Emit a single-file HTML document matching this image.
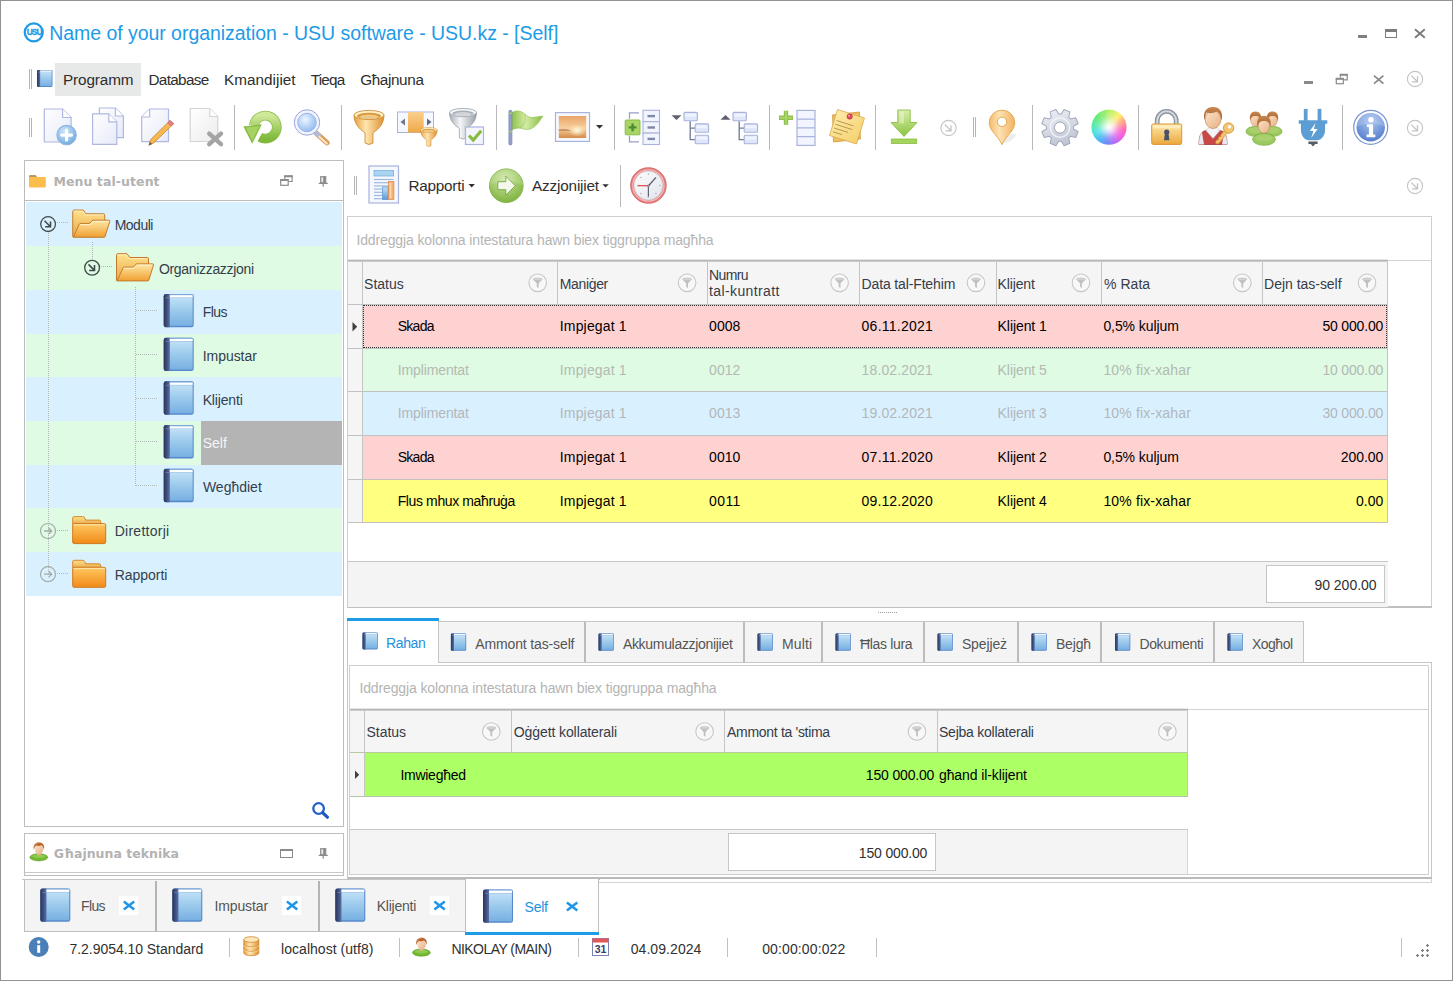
<!DOCTYPE html>
<html lang="mt"><head><meta charset="utf-8"><title>USU software</title>
<style>
html,body{margin:0;padding:0;}
body{width:1453px;height:981px;position:relative;overflow:hidden;background:#fff;font-family:"Liberation Sans", sans-serif;font-size:13px;}
.a{position:absolute;box-sizing:border-box;}
.t{position:absolute;white-space:pre;line-height:1;}
svg{overflow:visible;}
</style></head>
<body>
<div class="a" style="left:0px;top:0px;width:1453px;height:981px;border:1px solid #929292;"></div>
<svg class="a" style="left:22px;top:21px;" width="24" height="24" viewBox="0 0 24 24"><circle cx="11.750" cy="11.350" r="9" fill="#fff" stroke="#1e9be6" stroke-width="2.300"/><text x="12.100" y="14.400" font-family="Liberation Sans, sans-serif" font-size="8.400" font-weight="700" fill="#1e9be6" text-anchor="middle" letter-spacing="-1" stroke="#1e9be6" stroke-width=".3">USU</text></svg>
<div class="t" id="t0" style="top:24px;font-size:19.5px;color:#1e9be6;letter-spacing:-0.041px;left:49.20px;">Name of your organization - USU software - USU.kz - [Self]</div>
<div class="a" style="left:1358px;top:35px;width:9px;height:3px;background:#808080;"></div>
<div class="a" style="left:1385px;top:29px;width:12px;height:9px;border:1px solid #7c7c7c;border-top-width:3px;"></div>
<svg class="a" style="left:1414px;top:28px;" width="12" height="11" viewBox="0 0 12 11"><path d="M1,1.300l9.800,8.400M10.800,1.300l-9.800,8.400" stroke="#7c7c7c" stroke-width="1.900" fill="none"/></svg>
<div class="a" style="left:29px;top:69px;width:1px;height:20px;background:#b4b4b4;"></div>
<div class="a" style="left:31px;top:69px;width:1px;height:20px;background:#b4b4b4;"></div>
<svg class="a" style="left:37px;top:70px;" width="16" height="18" viewBox="0 0 16 18"><rect x="0.00" y="0.00" width="15.50" height="17.00" rx="1.16" fill="#5688cc"/><rect x="1.55" y="0.00" width="13.95" height="2.04" rx="1.16" fill="#7aa6d8"/><rect x="3.10" y="1.96" width="11.60" height="14.04" fill="url(#gBook)"/><rect x="1.30" y="0.61" width="13.40" height="1.19" fill="#ffffff"/><path d="M1.16,0.00H3.10V17.00H1.16Q0.00,17.00 0.00,15.84V1.16Q0.00,0.00 1.16,0.00z" fill="url(#gSpine)"/><rect x="0.93" y="1.78" width="2.17" height="0.60" fill="#8ea4cc" opacity=".7"/></svg>
<div class="a" style="left:55px;top:63px;width:86px;height:33px;background:#e7e8e8;"></div>
<div class="t" id="t1" style="top:72px;font-size:15.3px;color:#2e2e2e;letter-spacing:-0.101px;left:62.90px;">Programm</div>
<div class="t" id="t2" style="top:72px;font-size:15.3px;color:#2e2e2e;letter-spacing:-0.655px;left:148.40px;">Database</div>
<div class="t" id="t3" style="top:72px;font-size:15.3px;color:#2e2e2e;letter-spacing:0.009px;left:224.10px;">Kmandijiet</div>
<div class="t" id="t4" style="top:72px;font-size:15.3px;color:#2e2e2e;letter-spacing:-0.776px;left:310.70px;">Tieqa</div>
<div class="t" id="t5" style="top:72px;font-size:15.3px;color:#2e2e2e;letter-spacing:-0.378px;left:360.20px;">Għajnuna</div>
<div class="a" style="left:1304px;top:81px;width:9px;height:3px;background:#8a8a8a;"></div>
<svg class="a" style="left:1335px;top:73px;" width="14" height="12" viewBox="0 0 14 12"><path d="M5.400,4.600v-3h6.800v5.300h-3.300" fill="none" stroke="#8a8a8a" stroke-width="1.200"/><rect x="1.300" y="5.700" width="7" height="5" fill="#fff" stroke="#8a8a8a" stroke-width="1.200"/><path d="M4.800,1.700h8M0.700,5.800h8.200" stroke="#8a8a8a" stroke-width="1.900"/></svg>
<svg class="a" style="left:1373px;top:75px;" width="12" height="10" viewBox="0 0 12 10"><path d="M1,0.600l9.400,8M10.400,0.600l-9.400,8" stroke="#8a8a8a" stroke-width="1.800" fill="none"/></svg>
<div class="a" style="left:29px;top:118px;width:1px;height:19px;background:#b4b4b4;"></div>
<div class="a" style="left:31px;top:118px;width:1px;height:19px;background:#b4b4b4;"></div>
<div class="a" style="left:234px;top:105px;width:1px;height:45px;background:#b9b9b9;"></div>
<div class="a" style="left:341px;top:105px;width:1px;height:45px;background:#b9b9b9;"></div>
<div class="a" style="left:496px;top:105px;width:1px;height:45px;background:#b9b9b9;"></div>
<div class="a" style="left:614px;top:105px;width:1px;height:45px;background:#b9b9b9;"></div>
<div class="a" style="left:769px;top:105px;width:1px;height:45px;background:#b9b9b9;"></div>
<div class="a" style="left:875px;top:105px;width:1px;height:45px;background:#b9b9b9;"></div>
<div class="a" style="left:1032px;top:105px;width:1px;height:45px;background:#b9b9b9;"></div>
<div class="a" style="left:1138px;top:105px;width:1px;height:45px;background:#b9b9b9;"></div>
<div class="a" style="left:1342px;top:105px;width:1px;height:45px;background:#b9b9b9;"></div>
<div class="a" style="left:973px;top:117px;width:1px;height:20px;background:#b4b4b4;"></div>
<div class="a" style="left:975px;top:117px;width:1px;height:20px;background:#b4b4b4;"></div>
<div class="a" style="left:24px;top:160px;width:320px;height:667px;border:1px solid #bdbdbd;"></div>
<div class="a" style="left:24px;top:200px;width:320px;height:1px;background:#bdbdbd;"></div>
<div class="t" id="t6" style="top:176px;font-size:12.5px;color:#b2b2b2;font-weight:700;letter-spacing:0.078px;left:53.40px;font-family:'DejaVu Sans',sans-serif;">Menu tal-utent</div>
<svg class="a" style="left:280px;top:174px;" width="14" height="13" viewBox="0 0 14 13"><path d="M4.800,5v-2.900h7.300v5.400h-3.400" fill="none" stroke="#8c8c8c" stroke-width="1.200"/><rect x="0.700" y="5.800" width="7.500" height="5.500" fill="#fff" stroke="#8c8c8c" stroke-width="1.200"/><path d="M4.200,2.200h8.500M0.100,5.900h8.700" stroke="#8c8c8c" stroke-width="2"/></svg>
<svg class="a" style="left:318px;top:175px;" width="11" height="13" viewBox="0 0 11 13"><rect x="2.700" y="1.700" width="5" height="6" fill="#e8e8e8" stroke="#8c8c8c" stroke-width="1.200"/><rect x="5.200" y="1.700" width="2.500" height="6" fill="#8c8c8c"/><path d="M0.800,8.300h9M5.200,8.300v3.400" stroke="#8c8c8c" stroke-width="1.200" fill="none"/></svg>
<div class="a" style="left:26px;top:202px;width:316px;height:44px;background:#d9f1ff;"></div>
<div class="a" style="left:26px;top:246px;width:316px;height:44px;background:#dffbe3;"></div>
<div class="a" style="left:26px;top:290px;width:316px;height:44px;background:#d9f1ff;"></div>
<div class="a" style="left:26px;top:334px;width:316px;height:43px;background:#dffbe3;"></div>
<div class="a" style="left:26px;top:377px;width:316px;height:44px;background:#d9f1ff;"></div>
<div class="a" style="left:26px;top:421px;width:316px;height:44px;background:#dffbe3;"></div>
<div class="a" style="left:26px;top:465px;width:316px;height:43px;background:#d9f1ff;"></div>
<div class="a" style="left:26px;top:508px;width:316px;height:44px;background:#dffbe3;"></div>
<div class="a" style="left:26px;top:552px;width:316px;height:44px;background:#d9f1ff;"></div>
<div class="a" style="left:201px;top:421px;width:141px;height:44px;background:#b4b4b4;"></div>
<div class="t" id="t7" style="top:218px;font-size:14px;color:#343e4c;letter-spacing:-0.510px;left:114.70px;">Moduli</div>
<div class="t" id="t8" style="top:262px;font-size:14px;color:#343e4c;letter-spacing:-0.315px;left:158.90px;">Organizzazzjoni</div>
<div class="t" id="t9" style="top:305px;font-size:14px;color:#343e4c;letter-spacing:-0.584px;left:202.70px;">Flus</div>
<div class="t" id="t10" style="top:349px;font-size:14px;color:#343e4c;letter-spacing:-0.038px;left:202.70px;">Impustar</div>
<div class="t" id="t11" style="top:393px;font-size:14px;color:#343e4c;letter-spacing:-0.164px;left:202.70px;">Klijenti</div>
<div class="t" id="t12" style="top:436px;font-size:14px;color:#f4f4f4;letter-spacing:0.025px;left:202.70px;">Self</div>
<div class="t" id="t13" style="top:480px;font-size:14px;color:#343e4c;left:202.90px;">Wegħdiet</div>
<div class="t" id="t14" style="top:524px;font-size:14px;color:#343e4c;letter-spacing:0.264px;left:114.70px;">Direttorji</div>
<div class="t" id="t15" style="top:568px;font-size:14px;color:#343e4c;letter-spacing:-0.032px;left:114.70px;">Rapporti</div>
<div class="a" style="left:24px;top:833px;width:320px;height:43px;border:1px solid #bdbdbd;"></div>
<div class="a" style="left:25px;top:872px;width:318px;height:1px;background:#c8c8c8;"></div>
<div class="t" id="t16" style="top:848px;font-size:12.5px;color:#b2b2b2;font-weight:700;letter-spacing:0.010px;left:53.80px;font-family:'DejaVu Sans',sans-serif;">Għajnuna teknika</div>
<div class="a" style="left:280px;top:849px;width:13px;height:9px;border:1px solid #8a8a8a;border-top-width:2px;"></div>
<svg class="a" style="left:318px;top:847px;" width="11" height="13" viewBox="0 0 11 13"><rect x="2.700" y="1.700" width="5" height="6" fill="#e8e8e8" stroke="#8c8c8c" stroke-width="1.200"/><rect x="5.200" y="1.700" width="2.500" height="6" fill="#8c8c8c"/><path d="M0.800,8.300h9M5.200,8.300v3.400" stroke="#8c8c8c" stroke-width="1.200" fill="none"/></svg>
<div class="a" style="left:354px;top:176px;width:1px;height:19px;background:#b4b4b4;"></div>
<div class="a" style="left:356px;top:176px;width:1px;height:19px;background:#b4b4b4;"></div>
<div class="t" id="t17" style="top:178px;font-size:15.3px;color:#2e2e2e;letter-spacing:-0.233px;left:408.40px;">Rapporti</div>
<div class="t" id="t18" style="top:178px;font-size:15.3px;color:#2e2e2e;letter-spacing:-0.188px;left:532.10px;">Azzjonijiet</div>
<div class="a" style="left:620px;top:165px;width:1px;height:42px;background:#b9b9b9;"></div>
<div class="a" style="left:347px;top:216px;width:1085px;height:392px;border:1px solid #cfcfcf;border-bottom:2px solid #c0c0c0;"></div>
<div class="t" id="t19" style="top:233px;font-size:14px;color:#b4b4b4;letter-spacing:-0.128px;left:356.40px;">Iddreggja kolonna intestatura hawn biex tiggruppa magħha</div>
<div class="a" style="left:1387px;top:260px;width:44px;height:1px;background:#d2d2d2;"></div>
<div class="a" style="left:348px;top:259px;width:1040px;height:3px;background:linear-gradient(#e6e6e6 0 33%,#b6b6b6 33% 66%,#cdcdcd 66%);"></div>
<div class="a" style="left:348px;top:262px;width:1039px;height:42px;background:#f5f5f5;"></div>
<div class="a" style="left:1387px;top:262px;width:1px;height:261px;background:#c4c4c4;"></div>
<div class="a" style="left:362px;top:262px;width:1px;height:42px;background:#c4c4c4;"></div>
<div class="a" style="left:557px;top:262px;width:1px;height:42px;background:#c4c4c4;"></div>
<div class="a" style="left:707px;top:262px;width:1px;height:42px;background:#c4c4c4;"></div>
<div class="a" style="left:859px;top:262px;width:1px;height:42px;background:#c4c4c4;"></div>
<div class="a" style="left:996px;top:262px;width:1px;height:42px;background:#c4c4c4;"></div>
<div class="a" style="left:1101px;top:262px;width:1px;height:42px;background:#c4c4c4;"></div>
<div class="a" style="left:1262px;top:262px;width:1px;height:42px;background:#c4c4c4;"></div>
<div class="t" id="t20" style="top:277px;font-size:14px;color:#363c48;letter-spacing:-0.021px;left:364.10px;">Status</div>
<div class="t" id="t21" style="top:277px;font-size:14px;color:#363c48;letter-spacing:-0.349px;left:559.80px;">Maniġer</div>
<div class="t" id="t22" style="top:277px;font-size:14px;color:#363c48;letter-spacing:-0.143px;left:861.60px;">Data tal-Ftehim</div>
<div class="t" id="t23" style="top:277px;font-size:14px;color:#363c48;letter-spacing:-0.157px;left:997.60px;">Klijent</div>
<div class="t" id="t24" style="top:277px;font-size:14px;color:#363c48;letter-spacing:0.016px;left:1104.10px;">% Rata</div>
<div class="t" id="t25" style="top:277px;font-size:14px;color:#363c48;letter-spacing:-0.026px;left:1264.10px;">Dejn tas-self</div>
<div class="t" id="t26" style="top:268px;font-size:14px;color:#363c48;letter-spacing:-0.629px;left:709.10px;">Numru</div>
<div class="t" id="t27" style="top:284px;font-size:14px;color:#363c48;letter-spacing:0.378px;left:709.10px;">tal-kuntratt</div>
<div class="a" style="left:348px;top:304px;width:14px;height:44px;background:#f5f5f5;"></div>
<div class="a" style="left:363px;top:305px;width:1024px;height:43px;background:#ffd2d2;"></div>
<div class="a" style="left:348px;top:304px;width:1039px;height:1px;background:#c2c2c2;"></div>
<div class="a" style="left:348px;top:348px;width:14px;height:43px;background:#f5f5f5;"></div>
<div class="a" style="left:363px;top:349px;width:1024px;height:42px;background:#dffbe3;"></div>
<div class="a" style="left:348px;top:348px;width:1039px;height:1px;background:#c2c2c2;"></div>
<div class="a" style="left:348px;top:391px;width:14px;height:44px;background:#f5f5f5;"></div>
<div class="a" style="left:363px;top:392px;width:1024px;height:43px;background:#d9f1ff;"></div>
<div class="a" style="left:348px;top:391px;width:1039px;height:1px;background:#c2c2c2;"></div>
<div class="a" style="left:348px;top:435px;width:14px;height:44px;background:#f5f5f5;"></div>
<div class="a" style="left:363px;top:436px;width:1024px;height:43px;background:#ffd2d2;"></div>
<div class="a" style="left:348px;top:435px;width:1039px;height:1px;background:#c2c2c2;"></div>
<div class="a" style="left:348px;top:479px;width:14px;height:43px;background:#f5f5f5;"></div>
<div class="a" style="left:363px;top:480px;width:1024px;height:42px;background:#ffff80;"></div>
<div class="a" style="left:348px;top:479px;width:1039px;height:1px;background:#c2c2c2;"></div>
<div class="a" style="left:348px;top:522px;width:1040px;height:1px;background:#c2c2c2;"></div>
<div class="a" style="left:362px;top:304px;width:1px;height:218px;background:#c4c4c4;"></div>
<div class="a" style="left:363px;top:305px;width:1024px;height:43px;border:1px dotted #303030;"></div>
<div class="t" id="t28" style="top:319px;font-size:14px;color:#000;letter-spacing:-0.701px;left:397.70px;">Skada</div>
<div class="t" id="t29" style="top:319px;font-size:14px;color:#000;letter-spacing:0.158px;left:559.80px;">Impjegat 1</div>
<div class="t" id="t30" style="top:319px;font-size:14px;color:#000;letter-spacing:0.048px;left:709.10px;">0008</div>
<div class="t" id="t31" style="top:319px;font-size:14px;color:#000;letter-spacing:0.241px;left:861.60px;">06.11.2021</div>
<div class="t" id="t32" style="top:319px;font-size:14px;color:#000;letter-spacing:-0.077px;left:997.60px;">Klijent 1</div>
<div class="t" id="t33" style="top:319px;font-size:14px;color:#000;letter-spacing:-0.077px;left:1103.40px;">0,5% kuljum</div>
<div class="t" id="t34" style="top:319px;font-size:14px;color:#000;letter-spacing:-0.175px;right:69.87px;">50 000.00</div>
<div class="t" id="t35" style="top:363px;font-size:14px;color:#b3b9b3;letter-spacing:-0.116px;left:397.70px;">Implimentat</div>
<div class="t" id="t36" style="top:363px;font-size:14px;color:#b3b9b3;letter-spacing:0.158px;left:559.80px;">Impjegat 1</div>
<div class="t" id="t37" style="top:363px;font-size:14px;color:#b3b9b3;letter-spacing:0.048px;left:709.10px;">0012</div>
<div class="t" id="t38" style="top:363px;font-size:14px;color:#b3b9b3;letter-spacing:0.125px;left:861.60px;">18.02.2021</div>
<div class="t" id="t39" style="top:363px;font-size:14px;color:#b3b9b3;letter-spacing:-0.077px;left:997.60px;">Klijent 5</div>
<div class="t" id="t40" style="top:363px;font-size:14px;color:#b3b9b3;letter-spacing:0.151px;left:1103.40px;">10% fix-xahar</div>
<div class="t" id="t41" style="top:363px;font-size:14px;color:#b3b9b3;letter-spacing:-0.175px;right:69.87px;">10 000.00</div>
<div class="t" id="t42" style="top:406px;font-size:14px;color:#b3b6bb;letter-spacing:-0.116px;left:397.70px;">Implimentat</div>
<div class="t" id="t43" style="top:406px;font-size:14px;color:#b3b6bb;letter-spacing:0.158px;left:559.80px;">Impjegat 1</div>
<div class="t" id="t44" style="top:406px;font-size:14px;color:#b3b6bb;letter-spacing:0.048px;left:709.10px;">0013</div>
<div class="t" id="t45" style="top:406px;font-size:14px;color:#b3b6bb;letter-spacing:0.125px;left:861.60px;">19.02.2021</div>
<div class="t" id="t46" style="top:406px;font-size:14px;color:#b3b6bb;letter-spacing:-0.077px;left:997.60px;">Klijent 3</div>
<div class="t" id="t47" style="top:406px;font-size:14px;color:#b3b6bb;letter-spacing:0.151px;left:1103.40px;">10% fix-xahar</div>
<div class="t" id="t48" style="top:406px;font-size:14px;color:#b3b6bb;letter-spacing:-0.175px;right:69.87px;">30 000.00</div>
<div class="t" id="t49" style="top:450px;font-size:14px;color:#000;letter-spacing:-0.701px;left:397.70px;">Skada</div>
<div class="t" id="t50" style="top:450px;font-size:14px;color:#000;letter-spacing:0.158px;left:559.80px;">Impjegat 1</div>
<div class="t" id="t51" style="top:450px;font-size:14px;color:#000;letter-spacing:0.048px;left:709.10px;">0010</div>
<div class="t" id="t52" style="top:450px;font-size:14px;color:#000;letter-spacing:0.241px;left:861.60px;">07.11.2020</div>
<div class="t" id="t53" style="top:450px;font-size:14px;color:#000;letter-spacing:-0.077px;left:997.60px;">Klijent 2</div>
<div class="t" id="t54" style="top:450px;font-size:14px;color:#000;letter-spacing:-0.077px;left:1103.40px;">0,5% kuljum</div>
<div class="t" id="t55" style="top:450px;font-size:14px;color:#000;letter-spacing:-0.046px;right:69.75px;">200.00</div>
<div class="t" id="t56" style="top:494px;font-size:14px;color:#000;letter-spacing:-0.382px;left:397.70px;">Flus mhux maħruġa</div>
<div class="t" id="t57" style="top:494px;font-size:14px;color:#000;letter-spacing:0.158px;left:559.80px;">Impjegat 1</div>
<div class="t" id="t58" style="top:494px;font-size:14px;color:#000;letter-spacing:0.397px;left:709.10px;">0011</div>
<div class="t" id="t59" style="top:494px;font-size:14px;color:#000;letter-spacing:0.125px;left:861.60px;">09.12.2020</div>
<div class="t" id="t60" style="top:494px;font-size:14px;color:#000;letter-spacing:-0.077px;left:997.60px;">Klijent 4</div>
<div class="t" id="t61" style="top:494px;font-size:14px;color:#000;letter-spacing:0.151px;left:1103.40px;">10% fix-xahar</div>
<div class="t" id="t62" style="top:494px;font-size:14px;color:#000;letter-spacing:-0.017px;right:69.72px;">0.00</div>
<div class="a" style="left:348px;top:561px;width:1040px;height:1px;background:#c8c8c8;"></div>
<div class="a" style="left:348px;top:562px;width:1040px;height:45px;background:#f4f4f4;"></div>
<div class="a" style="left:1266px;top:565px;width:119px;height:38px;background:#fff;border:1px solid #c6c6c6;"></div>
<div class="t" id="t63" style="top:578px;font-size:14px;color:#303030;letter-spacing:-0.012px;right:76.41px;">90 200.00</div>
<div class="a" style="left:347px;top:662px;width:1085px;height:217px;border:1px solid #c6c6c6;border-bottom:2px solid #bababa;"></div>
<div class="a" style="left:439px;top:621px;width:865px;height:41px;background:#f4f4f4;border:1px solid #c6c6c6;border-left:none;border-bottom:none;"></div>
<div class="a" style="left:347px;top:621px;width:92px;height:42px;background:#fff;border:1px solid #c6c6c6;border-bottom:none;border-top:none;"></div>
<div class="a" style="left:347px;top:618px;width:92px;height:3px;background:#1e9be6;"></div>
<div class="t" id="t64" style="top:636px;font-size:14px;color:#1e90e0;letter-spacing:-0.391px;left:386.10px;">Rahan</div>
<div class="t" id="t65" style="top:637px;font-size:14px;color:#545454;letter-spacing:-0.139px;left:475.30px;">Ammont tas-self</div>
<div class="a" style="left:584px;top:622px;width:2px;height:40px;background:#bcbcbc;"></div>
<div class="t" id="t66" style="top:637px;font-size:14px;color:#545454;letter-spacing:-0.310px;left:622.90px;">Akkumulazzjonijiet</div>
<div class="a" style="left:743px;top:622px;width:2px;height:40px;background:#bcbcbc;"></div>
<div class="t" id="t67" style="top:637px;font-size:14px;color:#545454;letter-spacing:0.159px;left:781.90px;">Multi</div>
<div class="a" style="left:821px;top:622px;width:2px;height:40px;background:#bcbcbc;"></div>
<div class="t" id="t68" style="top:637px;font-size:14px;color:#545454;letter-spacing:-0.319px;left:859.90px;">Ħlas lura</div>
<div class="a" style="left:923px;top:622px;width:2px;height:40px;background:#bcbcbc;"></div>
<div class="t" id="t69" style="top:637px;font-size:14px;color:#545454;letter-spacing:-0.120px;left:961.90px;">Spejjeż</div>
<div class="a" style="left:1017px;top:622px;width:2px;height:40px;background:#bcbcbc;"></div>
<div class="t" id="t70" style="top:637px;font-size:14px;color:#545454;letter-spacing:-0.153px;left:1055.90px;">Bejgħ</div>
<div class="a" style="left:1100px;top:622px;width:2px;height:40px;background:#bcbcbc;"></div>
<div class="t" id="t71" style="top:637px;font-size:14px;color:#545454;letter-spacing:-0.340px;left:1139.40px;">Dokumenti</div>
<div class="a" style="left:1213px;top:622px;width:2px;height:40px;background:#bcbcbc;"></div>
<div class="t" id="t72" style="top:637px;font-size:14px;color:#545454;letter-spacing:-0.479px;left:1251.90px;">Xogħol</div>
<div class="a" style="left:349px;top:665px;width:1080px;height:210px;border:1px solid #cfcfcf;"></div>
<div class="t" id="t73" style="top:681px;font-size:14px;color:#b4b4b4;letter-spacing:-0.128px;left:359.40px;">Iddreggja kolonna intestatura hawn biex tiggruppa magħha</div>
<div class="a" style="left:1187px;top:709px;width:241px;height:1px;background:#d2d2d2;"></div>
<div class="a" style="left:350px;top:708px;width:838px;height:3px;background:linear-gradient(#e6e6e6 0 33%,#b6b6b6 33% 66%,#cdcdcd 66%);"></div>
<div class="a" style="left:350px;top:711px;width:837px;height:41px;background:#f5f5f5;"></div>
<div class="a" style="left:364px;top:711px;width:1px;height:41px;background:#c4c4c4;"></div>
<div class="a" style="left:511px;top:711px;width:1px;height:41px;background:#c4c4c4;"></div>
<div class="a" style="left:724px;top:711px;width:1px;height:41px;background:#c4c4c4;"></div>
<div class="a" style="left:937px;top:711px;width:1px;height:41px;background:#c4c4c4;"></div>
<div class="a" style="left:1187px;top:711px;width:1px;height:41px;background:#c4c4c4;"></div>
<div class="t" id="t74" style="top:725px;font-size:14px;color:#363c48;letter-spacing:-0.021px;left:366.50px;">Status</div>
<div class="t" id="t75" style="top:725px;font-size:14px;color:#363c48;letter-spacing:-0.098px;left:513.80px;">Oġġett kollaterali</div>
<div class="t" id="t76" style="top:725px;font-size:14px;color:#363c48;letter-spacing:-0.314px;left:727.10px;">Ammont ta 'stima</div>
<div class="t" id="t77" style="top:725px;font-size:14px;color:#363c48;letter-spacing:-0.246px;left:939.00px;">Sejba kollaterali</div>
<div class="a" style="left:350px;top:752px;width:838px;height:1px;background:#b6c8a4;"></div>
<div class="a" style="left:350px;top:753px;width:14px;height:43px;background:#f5f5f5;"></div>
<div class="a" style="left:364px;top:752px;width:1px;height:44px;background:#c4c4c4;"></div>
<div class="a" style="left:365px;top:753px;width:822px;height:43px;background:#adff66;"></div>
<div class="a" style="left:350px;top:796px;width:838px;height:1px;background:#b4c4a4;"></div>
<div class="a" style="left:1187px;top:711px;width:1px;height:86px;background:#c4c4c4;"></div>
<div class="t" id="t78" style="top:768px;font-size:14px;color:#000;letter-spacing:-0.263px;left:400.40px;">Imwiegħed</div>
<div class="t" id="t79" style="top:768px;font-size:14px;color:#000;letter-spacing:-0.164px;right:518.76px;">150 000.00</div>
<div class="t" id="t80" style="top:768px;font-size:14px;color:#000;letter-spacing:-0.100px;left:939.00px;">għand il-klijent</div>
<div class="a" style="left:350px;top:829px;width:838px;height:1px;background:#c8c8c8;"></div>
<div class="a" style="left:350px;top:830px;width:838px;height:44px;background:#f4f4f4;"></div>
<div class="a" style="left:1187px;top:830px;width:1px;height:44px;background:#d8d8d8;"></div>
<div class="a" style="left:728px;top:833px;width:208px;height:38px;background:#fff;border:1px solid #c6c6c6;"></div>
<div class="t" id="t81" style="top:846px;font-size:14px;color:#303030;letter-spacing:-0.164px;right:525.76px;">150 000.00</div>
<div class="a" style="left:22px;top:879px;width:578px;height:1px;background:#c4c4c4;"></div>
<div class="a" style="left:598px;top:882px;width:834px;height:1px;background:#d4d4d4;"></div>
<div class="a" style="left:1431px;top:879px;width:1px;height:4px;background:#d4d4d4;"></div>
<div class="a" style="left:24px;top:880px;width:442px;height:52px;background:#f4f4f4;border:1px solid #bebebe;border-top:none;border-right:none;"></div>
<div class="a" style="left:119px;top:896px;width:19px;height:19px;background:#fff;"></div>
<div class="t" id="t82" style="top:899px;font-size:14px;color:#545454;letter-spacing:-0.651px;left:81.10px;">Flus</div>
<div class="a" style="left:155px;top:881px;width:2px;height:50px;background:#b4b4b4;"></div>
<div class="a" style="left:282px;top:896px;width:19px;height:19px;background:#fff;"></div>
<div class="t" id="t83" style="top:899px;font-size:14px;color:#545454;letter-spacing:-0.110px;left:214.40px;">Impustar</div>
<div class="a" style="left:318px;top:881px;width:2px;height:50px;background:#b4b4b4;"></div>
<div class="a" style="left:430px;top:896px;width:19px;height:19px;background:#fff;"></div>
<div class="t" id="t84" style="top:899px;font-size:14px;color:#545454;letter-spacing:-0.236px;left:376.70px;">Klijenti</div>
<div class="a" style="left:465px;top:879px;width:134px;height:53px;background:#fff;border:1px solid #c0c0c0;border-bottom:none;border-top:none"></div>
<div class="a" style="left:465px;top:932px;width:134px;height:3px;background:#1e9be6;"></div>
<div class="t" id="t85" style="top:900px;font-size:14px;color:#1e90e0;letter-spacing:-0.242px;left:524.60px;">Self</div>
<div class="t" id="t86" style="top:942px;font-size:14px;color:#303030;letter-spacing:-0.046px;left:69.50px;">7.2.9054.10 Standard</div>
<div class="a" style="left:229px;top:938px;width:1px;height:19px;background:#c0c0c0;"></div>
<div class="a" style="left:399px;top:938px;width:1px;height:19px;background:#c0c0c0;"></div>
<div class="a" style="left:578px;top:938px;width:1px;height:19px;background:#c0c0c0;"></div>
<div class="a" style="left:727px;top:938px;width:1px;height:19px;background:#c0c0c0;"></div>
<div class="a" style="left:876px;top:938px;width:1px;height:19px;background:#c0c0c0;"></div>
<div class="a" style="left:1401px;top:938px;width:1px;height:19px;background:#c0c0c0;"></div>
<div class="t" id="t87" style="top:942px;font-size:14px;color:#303030;letter-spacing:0.031px;left:281.10px;">localhost (utf8)</div>
<div class="t" id="t88" style="top:942px;font-size:14px;color:#303030;letter-spacing:-0.548px;left:451.40px;">NIKOLAY (MAIN)</div>
<div class="t" id="t89" style="top:942px;font-size:14px;color:#303030;letter-spacing:0.069px;left:630.70px;">04.09.2024</div>
<div class="t" id="t90" style="top:942px;font-size:14px;color:#303030;letter-spacing:0.123px;left:762.20px;">00:00:00:022</div>
<svg class="a" style="left:0;top:0;pointer-events:none" width="1453" height="981" viewBox="0 0 1453 981"><defs>
<linearGradient id="gPage" x1="0" y1="0" x2="1" y2="1"><stop offset="0" stop-color="#ffffff"/><stop offset="1" stop-color="#e6eaf8"/></linearGradient>
<linearGradient id="gPageG" x1="0" y1="0" x2="1" y2="1"><stop offset="0" stop-color="#ffffff"/><stop offset="1" stop-color="#ececec"/></linearGradient>
<linearGradient id="gGreen" x1="0" y1="0" x2="0" y2="1"><stop offset="0" stop-color="#cfe89a"/><stop offset="1" stop-color="#7fb83a"/></linearGradient>
<linearGradient id="gGreenL" x1="0" y1="0" x2="0" y2="1"><stop offset="0" stop-color="#d8eea8"/><stop offset="1" stop-color="#8ac442"/></linearGradient>
<linearGradient id="gGreenH" x1="0" y1="0" x2="1" y2="0"><stop offset="0" stop-color="#8cc048"/><stop offset=".45" stop-color="#d4ecA4"/><stop offset="1" stop-color="#86bc42"/></linearGradient>
<linearGradient id="gOrange" x1="0" y1="0" x2="1" y2="0"><stop offset="0" stop-color="#e8a040"/><stop offset=".4" stop-color="#ffe6b0"/><stop offset="1" stop-color="#e09030"/></linearGradient>
<linearGradient id="gOrangeV" x1="0" y1="0" x2="0" y2="1"><stop offset="0" stop-color="#ffe9b4"/><stop offset="1" stop-color="#eda234"/></linearGradient>
<linearGradient id="gPin" x1="0" y1="0" x2="1" y2="0"><stop offset="0" stop-color="#f4bc6c"/><stop offset=".4" stop-color="#fde2b4"/><stop offset="1" stop-color="#f0b260"/></linearGradient>
<linearGradient id="gSilver" x1="0" y1="0" x2="1" y2="0"><stop offset="0" stop-color="#a8b0b8"/><stop offset=".4" stop-color="#f4f6f8"/><stop offset="1" stop-color="#98a0a8"/></linearGradient>
<linearGradient id="gBlueV" x1="0" y1="0" x2="0" y2="1"><stop offset="0" stop-color="#c4e2fa"/><stop offset="1" stop-color="#5b9ad6"/></linearGradient>
<linearGradient id="gBook" x1="0" y1="0" x2="0" y2="1"><stop offset="0" stop-color="#c0e0f6"/><stop offset=".45" stop-color="#9ccaec"/><stop offset="1" stop-color="#78b0e2"/></linearGradient>
<linearGradient id="gSpine" x1="0" y1="0" x2="1" y2="0"><stop offset="0" stop-color="#28345a"/><stop offset=".5" stop-color="#3e4e7c"/><stop offset="1" stop-color="#5a6ea0"/></linearGradient>
<linearGradient id="gFolder" x1="0" y1="0" x2="0" y2="1"><stop offset="0" stop-color="#ffe9a8"/><stop offset="1" stop-color="#f0a030"/></linearGradient>
<linearGradient id="gFolderC" x1="0" y1="0" x2="0" y2="1"><stop offset="0" stop-color="#ffc860"/><stop offset="1" stop-color="#f08a18"/></linearGradient>
<linearGradient id="gFolderB" x1="0" y1="0" x2="0" y2="1"><stop offset="0" stop-color="#ffe28c"/><stop offset="1" stop-color="#e8a848"/></linearGradient>
<radialGradient id="gLens" cx=".4" cy=".35" r=".7"><stop offset="0" stop-color="#eef6ff"/><stop offset="1" stop-color="#8cb8f0"/></radialGradient>
<radialGradient id="gInfo" cx=".5" cy=".3" r=".8"><stop offset="0" stop-color="#a8c4f0"/><stop offset="1" stop-color="#4a74c8"/></radialGradient>
<radialGradient id="gGo" cx=".45" cy=".3" r=".8"><stop offset="0" stop-color="#cfe8a0"/><stop offset="1" stop-color="#74ac34"/></radialGradient>
<radialGradient id="gPlusC" cx=".4" cy=".3" r=".8"><stop offset="0" stop-color="#cfe6fa"/><stop offset="1" stop-color="#6aa4dc"/></radialGradient>
<linearGradient id="gFace" x1="0" y1="0" x2="1" y2="1"><stop offset="0" stop-color="#ffffff"/><stop offset="1" stop-color="#dfe3ea"/></linearGradient>
<linearGradient id="gLock" x1="0" y1="0" x2="0" y2="1"><stop offset="0" stop-color="#ffe8a8"/><stop offset="1" stop-color="#eca83c"/></linearGradient>
<linearGradient id="gGear" x1="0" y1="0" x2="1" y2="1"><stop offset="0" stop-color="#f2f4f8"/><stop offset="1" stop-color="#b4bccc"/></linearGradient>
<linearGradient id="gSky" x1="0" y1="0" x2="0" y2="1"><stop offset="0" stop-color="#e8a468"/><stop offset=".55" stop-color="#f8d09c"/><stop offset="1" stop-color="#d48c4c"/></linearGradient>
<radialGradient id="gSun" cx=".5" cy=".5" r=".5"><stop offset="0" stop-color="#fffbe8"/><stop offset="1" stop-color="#fff0c0" stop-opacity="0"/></radialGradient>
<linearGradient id="gSkin" x1="0" y1="0" x2="1" y2="1"><stop offset="0" stop-color="#fde4c8"/><stop offset="1" stop-color="#e8b088"/></linearGradient>
<linearGradient id="gHair" x1="0" y1="0" x2="0" y2="1"><stop offset="0" stop-color="#c88850"/><stop offset="1" stop-color="#a05c28"/></linearGradient>
<linearGradient id="gNote" x1="0" y1="0" x2="1" y2="1"><stop offset="0" stop-color="#fff0b0"/><stop offset="1" stop-color="#f4cc68"/></linearGradient>
<filter id="fBlur" x="-20%" y="-20%" width="140%" height="140%"><feGaussianBlur stdDeviation="2.2"/></filter><radialGradient id="gWheelW" cx=".5" cy=".5" r=".5"><stop offset="0" stop-color="#fff" stop-opacity="1"/><stop offset=".22" stop-color="#fff" stop-opacity=".75"/><stop offset=".6" stop-color="#fff" stop-opacity=".25"/><stop offset="1" stop-color="#fff" stop-opacity="0"/></radialGradient></defs><g transform="translate(1415,79)"><circle r="7.6" fill="#fff" stroke="#c4c4c4" stroke-width="1.1"/><path d="M-3.69,-3.39L2.49,2.79M-3.03,2.79H2.49V-2.71" fill="none" stroke="#c4c4c4" stroke-width="1.32"/></g>
<g transform="translate(1415,128)"><circle r="7.6" fill="#fff" stroke="#c4c4c4" stroke-width="1.1"/><path d="M-3.69,-3.39L2.49,2.79M-3.03,2.79H2.49V-2.71" fill="none" stroke="#c4c4c4" stroke-width="1.32"/></g>
<g transform="translate(1415,186)"><circle r="7.6" fill="#fff" stroke="#c4c4c4" stroke-width="1.1"/><path d="M-3.69,-3.39L2.49,2.79M-3.03,2.79H2.49V-2.71" fill="none" stroke="#c4c4c4" stroke-width="1.32"/></g>
<g transform="translate(60,127)"><path d="M-15.7,-18h18.3l8.5,8.5v24.5h-26.8z" fill="url(#gPage)" stroke="#aeb8e0" stroke-width="1.2"/><path d="M2.6000000000000014,-18v8.5h8.5" fill="#fff" stroke="#aeb8e0" stroke-width="1.2"/><circle cx="6.600" cy="8.100" r="9.700" fill="url(#gPlusC)" stroke="#8cb4e0" stroke-width="1.100"/><path d="M6.600,3.200v9.800M1.700,8.100h9.800" stroke="#fff" stroke-width="3.200" stroke-linecap="round"/></g>
<g transform="translate(108,127)"><path d="M-8.6,-19h16l8,8v21.6h-24z" fill="url(#gPage)" stroke="#aeb8e0" stroke-width="1.2"/><path d="M7.4,-19v8h8" fill="#fff" stroke="#aeb8e0" stroke-width="1.2"/><path d="M-15.4,-13.2h16.2l8,8v22.6h-24.2z" fill="url(#gPage)" stroke="#aeb8e0" stroke-width="1.2"/><path d="M0.7999999999999989,-13.2v8h8" fill="#fff" stroke="#aeb8e0" stroke-width="1.2"/></g>
<g transform="translate(157,127)"><path d="M-7.300000000000001,-18h18.8v32.6h-26.8v-24.6z" fill="url(#gPage)" stroke="#aeb8e0" stroke-width="1.2"/><path d="M-7.300000000000001,-18v8h-8" fill="#fff" stroke="#aeb8e0" stroke-width="1.2"/><path d="M13,-6.5l3.6,3.2l-19.5,19l-5.2,2.6l1.6,-5.6z" fill="#f6b850" stroke="#c88830" stroke-width=".8"/><path d="M11.2,-4.6l3.6,3.2" stroke="#fce0a0" stroke-width="1.6"/><path d="M13,-6.5l3.6,3.2l-2.4,2.4l-3.6,-3.2z" fill="#e8808c" stroke="#c05868" stroke-width=".6"/><path d="M-8.1,18.3l1.0,-3.3l2.2,2.0z" fill="#605048"/></g>
<g transform="translate(206,127)"><path d="M-15.8,-18.5h19.6l8,8v25h-27.6z" fill="url(#gPageG)" stroke="#d4d4d4" stroke-width="1.2"/><path d="M3.8000000000000007,-18.5v8h8" fill="#fff" stroke="#d4d4d4" stroke-width="1.2"/><path d="M3.200,6.600l11.800,10.600M15,6.600l-11.800,10.600" stroke="#a4a4a4" stroke-width="4.400" stroke-linecap="round"/></g>
<g transform="translate(263,127)"><path d="M-3.10,10.25A11.5,11.5 0 1 0 -9.09,-1.50" fill="none" stroke="#86bc44" stroke-width="9.8"/><path d="M-3.10,10.25A11.5,11.5 0 1 0 -9.09,-1.50" fill="none" stroke="url(#gGreen)" stroke-width="8.2"/><path d="M-19.6,-0.6l18.4,-2.2l-9.6,19.6z" fill="#86bc44"/><path d="M-17.2,0.6l13.8,-1.6l-7.3,14.8z" fill="#a6d262"/></g>
<g transform="translate(311,127.5)"><path d="M5,5.500l11,9.800" stroke="#d89c5c" stroke-width="5.200" stroke-linecap="round"/><path d="M4,4.600l5,4.500" stroke="#b4bcd8" stroke-width="4.600"/><path d="M8.500,9.400l7.400,6.600" stroke="#fce8c4" stroke-width="2" stroke-linecap="round"/><circle cx="-4" cy="-5" r="12.700" fill="#f2f5fe" stroke="#9aa6d6" stroke-width="1"/><circle cx="-4" cy="-5" r="9.300" fill="url(#gLens)" stroke="#9fb4ea" stroke-width="1"/></g>
<g transform="translate(369,127.5)"><g transform="scale(1.0)"><path d="M-15,-12.5C-15,-1 -6,3.5 -4,5.5L-4,15.5Q0,18.5 4,15.5L4,5.5C6,3.5 15,-1 15,-12.5z" fill="url(#gOrange)" stroke="#c88428" stroke-width=".8"/><ellipse cx="0" cy="-12.5" rx="15" ry="4.6" fill="#fff0c8" stroke="#c88428" stroke-width=".8"/><ellipse cx="0" cy="-11.6" rx="12" ry="3.1" fill="#d89838"/><ellipse cx="0" cy="-10.8" rx="9.5" ry="2.2" fill="#fff0c8" opacity=".55"/></g></g>
<g transform="translate(417.5,128)"><rect x="-20" y="-16" width="36" height="20.5" fill="#f6f8ff" stroke="#a9b3dc" stroke-width="1"/><rect x="-9.5" y="-16" width="15.5" height="20.5" fill="#f0b060"/><rect x="-9.5" y="-16" width="15.5" height="20.5" fill="url(#gOrangeV)" opacity=".55"/><path d="M-12.5,-9.5v7l-4.5,-3.5z" fill="#707890"/><path d="M9.5,-9.5v7l4.5,-3.5z" fill="#606880"/><g transform="translate(11.300,9)"><g transform="scale(0.56)"><path d="M-15,-12.5C-15,-1 -6,3.5 -4,5.5L-4,15.5Q0,18.5 4,15.5L4,5.5C6,3.5 15,-1 15,-12.5z" fill="url(#gOrange)" stroke="#c88428" stroke-width=".8"/><ellipse cx="0" cy="-12.5" rx="15" ry="4.6" fill="#fff0c8" stroke="#c88428" stroke-width=".8"/><ellipse cx="0" cy="-11.6" rx="12" ry="3.1" fill="#d89838"/><ellipse cx="0" cy="-10.8" rx="9.5" ry="2.2" fill="#fff0c8" opacity=".55"/></g></g></g>
<g transform="translate(467,127)"><g transform="translate(-4,-3.200)"><g transform="scale(0.9)"><path d="M-15,-12.5C-15,-1 -6,3.5 -4,5.5L-4,15.5Q0,18.5 4,15.5L4,5.5C6,3.5 15,-1 15,-12.5z" fill="url(#gSilver)" stroke="#909aa4" stroke-width=".8"/><ellipse cx="0" cy="-12.5" rx="15" ry="4.6" fill="#f4f6f8" stroke="#909aa4" stroke-width=".8"/><ellipse cx="0" cy="-11.6" rx="12" ry="3.1" fill="#a8b0b8"/><ellipse cx="0" cy="-10.8" rx="9.5" ry="2.2" fill="#f4f6f8" opacity=".55"/></g></g><rect x="-1.5" y="0" width="18" height="17.5" fill="#f4f6ff" stroke="#a9b3dc" stroke-width="1.2"/><path d="M2,8.5l4.2,4.6l8,-9.4" fill="none" stroke="#88bc40" stroke-width="3.2"/></g>
<g transform="translate(525.5,127.3)"><path d="M-14,-14.500C-9,-17.500 -4.500,-16.500 -1,-13.500C2,-11 4,-9.500 7.500,-9.800C11,-10.100 14,-10.800 17.500,-11.200C14.500,-7.500 12,-1.500 6,1.200C1,3.400 -2,1.200 -6,0.800C-9,0.500 -11.500,1.500 -14,3z" fill="url(#gGreenH)" stroke="#94c456" stroke-width=".7"/><path d="M-1,-13.500C1,-8 0,-3 -6,0.800" fill="none" stroke="#8cbc4c" stroke-width=".8" opacity=".6"/><rect x="-16.600" y="-17" width="3" height="34.600" rx="1.200" fill="#94a2cc" stroke="#7482b4" stroke-width=".7"/><rect x="-16.600" y="-14.800" width="3" height="1.500" fill="#a4d060"/><rect x="-16.600" y="3.600" width="3" height="1.500" fill="#a4d060"/></g>
<g transform="translate(572.5,127)"><rect x="-17" y="-14.400" width="34" height="28.800" fill="#f8f9ff" stroke="#a9b3dc" stroke-width="1.2"/><rect x="-13.700" y="-11" width="27.400" height="22" fill="url(#gSky)"/><ellipse cx="4.5" cy="3.5" rx="9" ry="6" fill="url(#gSun)"/><path d="M-14,2.5q7,-1.5 13,1.5h-13z" fill="#9c6c4c" opacity=".55"/></g>
<g transform="translate(642.5,127.3)"><path d="M-3.500,-14.500h-9.500v6M-3.500,14.500h-9.500v-6" fill="none" stroke="#98a0c4" stroke-width="1.300"/><rect x="-17.300" y="-7.300" width="14.800" height="14.800" rx="1" fill="#a8d468" stroke="#88bc40" stroke-width="1"/><path d="M-9.900,-3.800v7.800M-13.800,0.100h7.800" stroke="#4c8c2c" stroke-width="2.400"/><rect x="0.5" y="-17" width="16.5" height="11.4" fill="#f2f5ff" stroke="#a9b3dc" stroke-width="1.1"/><rect x="5" y="-12.4" width="7.5" height="2.4" fill="#8088a8"/><rect x="0.5" y="-5.6" width="16.5" height="11.4" fill="#f2f5ff" stroke="#a9b3dc" stroke-width="1.1"/><rect x="5" y="-1.0" width="7.5" height="2.4" fill="#8088a8"/><rect x="0.5" y="5.8" width="16.5" height="11.4" fill="#f2f5ff" stroke="#a9b3dc" stroke-width="1.1"/><rect x="5" y="10.399999999999999" width="7.5" height="2.4" fill="#8088a8"/></g>
<g transform="translate(690,127.7)"><path d="M-18.5,-12.4l5,4.6l5,-4.6z" fill="#606070"/><path d="M0.2,-6.5v18.5h5M0.2,0.5h5" fill="none" stroke="#707894" stroke-width="1.3"/><rect x="-6" y="-15.3" width="13.4" height="8.4" rx="1" fill="#dfe6fa" stroke="#a9b3dc" stroke-width="1.1"/><rect x="-4.7" y="-14.0" width="10.8" height="3" fill="#f4f7ff" opacity=".8"/><rect x="5.2" y="-3.8" width="13.4" height="8.4" rx="1" fill="#dfe6fa" stroke="#a9b3dc" stroke-width="1.1"/><rect x="6.5" y="-2.5" width="10.8" height="3" fill="#f4f7ff" opacity=".8"/><rect x="5.2" y="7.6" width="13.4" height="8.4" rx="1" fill="#dfe6fa" stroke="#a9b3dc" stroke-width="1.1"/><rect x="6.5" y="8.9" width="10.8" height="3" fill="#f4f7ff" opacity=".8"/></g>
<g transform="translate(739,127.7)"><path d="M-18.5,-8l5,-4.6l5,4.6z" fill="#606070"/><path d="M0.2,-6.5v18.5h5M0.2,0.5h5" fill="none" stroke="#707894" stroke-width="1.3"/><rect x="-6" y="-15.3" width="13.4" height="8.4" rx="1" fill="#dfe6fa" stroke="#a9b3dc" stroke-width="1.1"/><rect x="-4.7" y="-14.0" width="10.8" height="3" fill="#f4f7ff" opacity=".8"/><rect x="5.2" y="-3.8" width="13.4" height="8.4" rx="1" fill="#dfe6fa" stroke="#a9b3dc" stroke-width="1.1"/><rect x="6.5" y="-2.5" width="10.8" height="3" fill="#f4f7ff" opacity=".8"/><rect x="5.2" y="7.6" width="13.4" height="8.4" rx="1" fill="#dfe6fa" stroke="#a9b3dc" stroke-width="1.1"/><rect x="6.5" y="8.9" width="10.8" height="3" fill="#f4f7ff" opacity=".8"/></g>
<g transform="translate(797.5,127.7)"><path d="M-11.5,-17v14M-18.5,-10h14" stroke="#8cc048" stroke-width="4.4"/><path d="M-11.5,-16.4v12.8M-17.9,-10h12.8" stroke="#a8d468" stroke-width="2"/><rect x="-0.5" y="-17.3" width="18" height="35" fill="#f2f5ff" stroke="#a9b3dc" stroke-width="1.2"/><path d="M-0.5,-8.5h18M-0.5,0.2h18M-0.5,9h18" stroke="#a9b3dc" stroke-width="1.2"/></g>
<g transform="translate(846.5,127)"><path d="M-13,-13l27,-1l-1,27l-27,1z" fill="#f0c060" stroke="#d09838" stroke-width=".8" transform="rotate(-4)"/><path d="M-9,-17.5l27,8.5l-8,26l-27,-8.5z" fill="url(#gNote)" stroke="#d8a848" stroke-width=".8"/><path d="M-10,-6.5l17,5.4M-11.2,-2.8l17,5.4M-12.4,1l14,4.4M-13.6,4.8l9,2.8" stroke="#b89850" stroke-width="1"/><circle cx="3.2" cy="-10.5" r="2.7" fill="#e04860" stroke="#b83048" stroke-width=".6"/><circle cx="2.5" cy="-11.3" r=".9" fill="#ffb0b8"/></g>
<g transform="translate(904,127)"><path d="M-6.200,-17h12.400v12.500h6.800l-13,14l-13,-14h6.800z" fill="url(#gGreenL)" stroke="#8cc048" stroke-width=".9"/><path d="M-4.600,-15.600h4.600v12h-4.600z" fill="#eef8d8" opacity=".5"/><rect x="-12.700" y="12" width="25.400" height="4.600" fill="#a4d45c" stroke="#8cc048" stroke-width=".8"/></g>
<g transform="translate(948.5,128)"><circle r="7.6" fill="#fff" stroke="#c4c4c4" stroke-width="1.1"/><path d="M-3.69,-3.39L2.49,2.79M-3.03,2.79H2.49V-2.71" fill="none" stroke="#c4c4c4" stroke-width="1.32"/></g>
<g transform="translate(1002,127.3)"><ellipse cx="7" cy="11" rx="8" ry="3" fill="#000" opacity=".07" transform="rotate(-30 7 11)"/><path d="M0,17.4C-3.6,8.500 -12.800,3.500 -12.800,-4.400A12.800,12.800 0 0 1 12.800,-4.400C12.800,3.500 3.600,8.500 0,17.400z" fill="url(#gPin)" stroke="#e6ac58" stroke-width="1"/><circle cx="0" cy="-5.500" r="4.700" fill="#fff" stroke="#e0a850" stroke-width="1"/></g>
<g transform="translate(1060,127.6)"><path d="M12.99,-4.02 L18.33,-3.15 L18.33,3.15 L12.99,4.02 L12.03,6.35 L15.19,10.74 L10.74,15.19 L6.35,12.03 L4.02,12.99 L3.15,18.33 L-3.15,18.33 L-4.02,12.99 L-6.35,12.03 L-10.74,15.19 L-15.19,10.74 L-12.03,6.35 L-12.99,4.02 L-18.33,3.15 L-18.33,-3.15 L-12.99,-4.02 L-12.03,-6.35 L-15.19,-10.74 L-10.74,-15.19 L-6.35,-12.03 L-4.02,-12.99 L-3.15,-18.33 L3.15,-18.33 L4.02,-12.99 L6.35,-12.03 L10.74,-15.19 L15.19,-10.74 L12.03,-6.35z" fill="url(#gGear)" stroke="#a0a8bc" stroke-width="1" stroke-linejoin="round" transform="rotate(22.5)"/><circle r="5.6" fill="#fff" stroke="#a0a8bc" stroke-width="1"/><circle r="9.6" fill="none" stroke="#f8f9fc" stroke-width="1.4" opacity=".8"/></g>
<g transform="translate(1109,127.2)"><clipPath id="cpW"><circle r="17.6"/></clipPath><g clip-path="url(#cpW)"><g filter="url(#fBlur)"><path d="M0,0L8.42,-19.37L17.61,-11.66z" fill="#fff060"/><path d="M0,0L16.98,-12.56L21.08,-1.29z" fill="#ff9878"/><path d="M0,0L20.98,-2.39L18.90,9.42z" fill="#ff5cb0"/><path d="M0,0L19.37,8.42L11.66,17.61z" fill="#f050e0"/><path d="M0,0L12.56,16.98L1.29,21.08z" fill="#b060f4"/><path d="M0,0L2.39,20.98L-9.42,18.90z" fill="#6080f8"/><path d="M0,0L-8.42,19.37L-17.61,11.66z" fill="#40b0f8"/><path d="M0,0L-16.98,12.56L-21.08,1.29z" fill="#40e0e0"/><path d="M0,0L-20.98,2.39L-18.90,-9.42z" fill="#4ce8a0"/><path d="M0,0L-19.37,-8.42L-11.66,-17.61z" fill="#5ce870"/><path d="M0,0L-12.56,-16.98L-1.29,-21.08z" fill="#80ec60"/><path d="M0,0L-2.39,-20.98L9.42,-18.90z" fill="#c4f060"/></g><circle r="17.6" fill="url(#gWheelW)"/></g></g>
<g transform="translate(1166.7,127)"><path d="M-9.500,-2v-4.200a9.500,9.500 0 0 1 19,0v4.200" fill="none" stroke="#8c94a0" stroke-width="4.800"/><path d="M-9.500,-2v-4.200a9.500,9.500 0 0 1 19,0v4.200" fill="none" stroke="#d4d8e0" stroke-width="2"/><rect x="-15" y="-3" width="30" height="20.4" rx="1.6" fill="url(#gLock)" stroke="#d89838" stroke-width="1"/><rect x="-13.6" y="-1.6" width="27.2" height="3" fill="#fff4cc" opacity=".7"/><circle cx="0" cy="5" r="2.6" fill="#48506c"/><path d="M-1.7,6l-1,7.2h5.4l-1,-7.2z" fill="#48506c"/></g>
<g transform="translate(1216,126.5)"><path d="M-17,18c0,-9 2,-13 7,-14l7,-2l7,2c5,1 7,5 7,14z" fill="#c84848" stroke="#a03838" stroke-width=".8"/><path d="M-10,4l7,8l7,-8l-3,-3h-8z" fill="#f4f4f8" stroke="#b8b8c8" stroke-width=".6"/><path d="M-17,18c0,-7 1,-10 3,-12l2,12zM11,18c0,-7 -1,-10 -3,-12l-2,12z" fill="#e8e8f0"/><ellipse cx="-3" cy="-7" rx="7.8" ry="9" fill="url(#gSkin)" stroke="#c08858" stroke-width=".7"/><path d="M-11.5,-6c-2,-9 2,-13.5 8.5,-13.5s10.5,4.500 8.500,13.500c-1,-5 -2,-8 -5,-9c-3,2 -8,2 -10,1c-1,2 -1.500,4 -2,8z" fill="url(#gHair)"/><g transform="translate(9.500,5.500) rotate(38)"><circle cx="0" cy="-5" r="5.200" fill="#f4c470" stroke="#d09838" stroke-width=".8"/><circle cx="0" cy="-6.500" r="1.700" fill="#fff"/><path d="M-1.800,0h3.600v13.500l-2,1.500l-1.600,-1.500v-2l1.200,-1l-1.200,-1.200v-1.800l1.200,-1l-1.200,-1z" fill="#f4c470" stroke="#d09838" stroke-width=".7"/></g></g>
<g transform="translate(1264,127)"><g transform="translate(-8.500,-4.500)"><g transform="scale(0.74)"><ellipse cx="0" cy="12" rx="13" ry="6.800" fill="#9cc860" stroke="#7cac40" stroke-width=".8"/><ellipse cx="0" cy="10.500" rx="10" ry="4" fill="#b4d878" opacity=".5"/><ellipse cx="0" cy="-3.500" rx="6.600" ry="8.600" fill="url(#gSkin)" stroke="#c08858" stroke-width=".7"/><path d="M-7.200,-2c-1.800,-8.500 1.600,-12.800 7.200,-12.800s9,4.300 7.200,12.800c-.6,-4.500 -2.200,-6.800 -7.200,-6.800s-6.600,2.300 -7.200,6.800z" fill="url(#gHair)"/></g></g><g transform="translate(8.500,-4.500)"><g transform="scale(0.74)"><ellipse cx="0" cy="12" rx="13" ry="6.800" fill="#9cc860" stroke="#7cac40" stroke-width=".8"/><ellipse cx="0" cy="10.500" rx="10" ry="4" fill="#b4d878" opacity=".5"/><ellipse cx="0" cy="-3.500" rx="6.600" ry="8.600" fill="url(#gSkin)" stroke="#c08858" stroke-width=".7"/><path d="M-7.200,-2c-1.800,-8.500 1.600,-12.800 7.200,-12.800s9,4.300 7.200,12.800c-.6,-4.500 -2.200,-6.800 -7.200,-6.800s-6.600,2.300 -7.200,6.800z" fill="url(#gHair)"/></g></g><g transform="translate(0,1.800)"><g transform="scale(0.88)"><ellipse cx="0" cy="12" rx="13" ry="6.800" fill="#9cc860" stroke="#7cac40" stroke-width=".8"/><ellipse cx="0" cy="10.500" rx="10" ry="4" fill="#b4d878" opacity=".5"/><ellipse cx="0" cy="-3.500" rx="6.600" ry="8.600" fill="url(#gSkin)" stroke="#c08858" stroke-width=".7"/><path d="M-7.200,-2c-1.800,-8.500 1.600,-12.800 7.200,-12.800s9,4.300 7.200,12.800c-.6,-4.500 -2.200,-6.800 -7.200,-6.800s-6.600,2.300 -7.200,6.800z" fill="url(#gHair)"/></g></g></g>
<g transform="translate(1313,127.7)"><rect x="-9.200" y="-18.800" width="3.800" height="12" fill="#5c9ed4"/><rect x="4.600" y="-18.800" width="3.800" height="12" fill="#5c9ed4"/><path d="M-14.300,-7.500h28.600v3.500h-2.200v6c0,7.500 -5,10.500 -8.200,10.500h-7.800c-3.200,0 -8.200,-3 -8.200,-10.500v-6h-2.200z" fill="#5c9ed4"/><path d="M2.600,-4.600l-5.800,8h3.600l-2.200,7l6.400,-9h-3.800z" fill="#fff"/><path d="M-4.600,13.700h9.200v2.600h-2.400l-2.200,2.400l-2.200,-2.400h-2.400z" fill="#585c64"/></g>
<g transform="translate(1370.7,127.3)"><g transform="scale(1.0)"><circle r="17" fill="#fff" stroke="#7c94d0" stroke-width="1.200"/><circle r="14.200" fill="url(#gInfo)"/><path d="M-14.200,0a14.200,14.200 0 0 1 28.400,0c-8,-5 -20,-5 -28.400,0z" fill="#fff" opacity=".18"/><circle cx="0.300" cy="-7.600" r="2.700" fill="#fff"/><path d="M-3.800,-3h6.200v10.200h2.200v2.800h-8.800v-2.800h2.400v-7.400h-2z" fill="#fff"/></g></g>
<path d="M596,125h7l-3.500,3.800z" fill="#303030"/>
<path d="M29,176.500q0,-1.500 1.500,-1.500h5l1.500,2h7.500q1.300,0 1.300,1.300v8q0,1.200 -1.200,1.200h-14.400q-1.200,0 -1.200,-1.200z" fill="#fbbd4c"/><path d="M29,176.500q0,-1.500 1.500,-1.500h5l1.500,2h-8z" fill="#b89868"/>
<path d="M48.5,233V575" stroke="#b0b8b8" stroke-width="1" stroke-dasharray="1 1"/>
<path d="M57,222.5H69" stroke="#b0b8b8" stroke-width="1" stroke-dasharray="1 1"/>
<path d="M57,530.5H69" stroke="#b0b8b8" stroke-width="1" stroke-dasharray="1 1"/>
<path d="M57,573.5H69" stroke="#b0b8b8" stroke-width="1" stroke-dasharray="1 1"/>
<path d="M92.5,242V260" stroke="#b0b8b8" stroke-width="1" stroke-dasharray="1 1"/>
<path d="M101,266.5H113" stroke="#b0b8b8" stroke-width="1" stroke-dasharray="1 1"/>
<path d="M135.5,287V486" stroke="#b0b8b8" stroke-width="1" stroke-dasharray="1 1"/>
<path d="M136,310.5H157" stroke="#b0b8b8" stroke-width="1" stroke-dasharray="1 1"/>
<path d="M136,354.5H157" stroke="#b0b8b8" stroke-width="1" stroke-dasharray="1 1"/>
<path d="M136,398.5H157" stroke="#b0b8b8" stroke-width="1" stroke-dasharray="1 1"/>
<path d="M136,441.5H157" stroke="#b0b8b8" stroke-width="1" stroke-dasharray="1 1"/>
<path d="M136,485.5H157" stroke="#b0b8b8" stroke-width="1" stroke-dasharray="1 1"/>
<g transform="translate(48.1,224.1)"><circle r="7.4" fill="none" stroke="#414a4a" stroke-width="1.3"/><path d="M-3.61,-3.31L2.41,2.71M-2.95,2.71H2.41V-2.64" fill="none" stroke="#414a4a" stroke-width="1.56"/></g>
<g transform="translate(92.1,267.7)"><circle r="7.4" fill="none" stroke="#414a4a" stroke-width="1.3"/><path d="M-3.61,-3.31L2.41,2.71M-2.95,2.71H2.41V-2.64" fill="none" stroke="#414a4a" stroke-width="1.56"/></g>
<g transform="translate(48,531)"><circle r="7.500" fill="none" stroke="#a4aca8" stroke-width="1.200"/><path d="M-4,0h7.500M0.500,-3.200l3.200,3.200l-3.200,3.200" fill="none" stroke="#a4aca8" stroke-width="1.300"/></g>
<g transform="translate(48,574.2)"><circle r="7.500" fill="none" stroke="#a4aca8" stroke-width="1.200"/><path d="M-4,0h7.500M0.500,-3.200l3.200,3.200l-3.200,3.200" fill="none" stroke="#a4aca8" stroke-width="1.300"/></g>
<g transform="translate(91.25,223.6)"><path d="M-18.500,13.200V-12Q-18.500,-13.600 -17,-13.600H-8L-5.200,-9.800H12.300Q13.500,-9.800 13.500,-8.500V13.200z" fill="url(#gFolderB)" stroke="#c47a2c" stroke-width="1"/><path d="M-17.300,-12.400H-8.600L-5.800,-8.600H12.300" fill="none" stroke="#fff2c4" stroke-width="1" opacity=".9"/><path d="M-17.900,13.600L-12,0.600Q-11.600,-0.200 -10.600,-0.200H-1.600L1.400,-3.400H17.600Q18.900,-3.400 18.500,-2.200L13.900,12.600Q13.600,13.600 12.500,13.600z" fill="url(#gFolder)" stroke="#c47a2c" stroke-width="1"/><path d="M-10.800,1H-1.100L1.900,-2.200H17.200" fill="none" stroke="#fff4d0" stroke-width="1" opacity=".9"/></g>
<g transform="translate(135,267.3)"><path d="M-18.500,13.200V-12Q-18.500,-13.600 -17,-13.600H-8L-5.200,-9.800H12.300Q13.500,-9.800 13.500,-8.500V13.200z" fill="url(#gFolderB)" stroke="#c47a2c" stroke-width="1"/><path d="M-17.300,-12.400H-8.600L-5.800,-8.600H12.300" fill="none" stroke="#fff2c4" stroke-width="1" opacity=".9"/><path d="M-17.900,13.600L-12,0.600Q-11.600,-0.200 -10.600,-0.200H-1.600L1.400,-3.400H17.600Q18.900,-3.400 18.500,-2.200L13.900,12.600Q13.600,13.600 12.500,13.600z" fill="url(#gFolder)" stroke="#c47a2c" stroke-width="1"/><path d="M-10.800,1H-1.100L1.900,-2.200H17.200" fill="none" stroke="#fff4d0" stroke-width="1" opacity=".9"/></g>
<g transform="translate(89.2,530.1)"><path d="M-16.500,-6v-6q0,-1.500 1.500,-1.500h8.500q1.500,0 2,1.200l1,2.300h13.500q1.500,0 1.500,1.500v3z" fill="url(#gFolderB)" stroke="#d88830" stroke-width="1"/><rect x="-16.500" y="-6.500" width="33" height="20" rx="1.500" fill="url(#gFolderC)" stroke="#d07820" stroke-width="1"/><path d="M-15.500,-5.300h31" stroke="#ffe8b0" stroke-width="1.200" opacity=".9"/></g>
<g transform="translate(89.2,573.8)"><path d="M-16.500,-6v-6q0,-1.500 1.500,-1.500h8.500q1.500,0 2,1.200l1,2.300h13.500q1.500,0 1.500,1.500v3z" fill="url(#gFolderB)" stroke="#d88830" stroke-width="1"/><rect x="-16.500" y="-6.500" width="33" height="20" rx="1.500" fill="url(#gFolderC)" stroke="#d07820" stroke-width="1"/><path d="M-15.500,-5.300h31" stroke="#ffe8b0" stroke-width="1.200" opacity=".9"/></g>
<rect x="163.70" y="293.95" width="30.00" height="33.40" rx="2.25" fill="#5688cc"/><rect x="166.70" y="293.95" width="27.00" height="4.01" rx="2.25" fill="#7aa6d8"/><rect x="169.70" y="297.79" width="22.95" height="28.06" fill="url(#gBook)"/><rect x="166.22" y="295.15" width="26.43" height="2.34" fill="#ffffff"/><path d="M165.95,293.95H169.70V327.35H165.95Q163.70,327.35 163.70,325.10V296.20Q163.70,293.95 165.95,293.95z" fill="url(#gSpine)"/><rect x="165.50" y="297.46" width="4.20" height="0.67" fill="#8ea4cc" opacity=".7"/>
<rect x="163.70" y="337.65" width="30.00" height="33.40" rx="2.25" fill="#5688cc"/><rect x="166.70" y="337.65" width="27.00" height="4.01" rx="2.25" fill="#7aa6d8"/><rect x="169.70" y="341.49" width="22.95" height="28.06" fill="url(#gBook)"/><rect x="166.22" y="338.85" width="26.43" height="2.34" fill="#ffffff"/><path d="M165.95,337.65H169.70V371.05H165.95Q163.70,371.05 163.70,368.80V339.90Q163.70,337.65 165.95,337.65z" fill="url(#gSpine)"/><rect x="165.50" y="341.16" width="4.20" height="0.67" fill="#8ea4cc" opacity=".7"/>
<rect x="163.70" y="381.35" width="30.00" height="33.40" rx="2.25" fill="#5688cc"/><rect x="166.70" y="381.35" width="27.00" height="4.01" rx="2.25" fill="#7aa6d8"/><rect x="169.70" y="385.19" width="22.95" height="28.06" fill="url(#gBook)"/><rect x="166.22" y="382.55" width="26.43" height="2.34" fill="#ffffff"/><path d="M165.95,381.35H169.70V414.75H165.95Q163.70,414.75 163.70,412.50V383.60Q163.70,381.35 165.95,381.35z" fill="url(#gSpine)"/><rect x="165.50" y="384.86" width="4.20" height="0.67" fill="#8ea4cc" opacity=".7"/>
<rect x="163.70" y="425.05" width="30.00" height="33.40" rx="2.25" fill="#5688cc"/><rect x="166.70" y="425.05" width="27.00" height="4.01" rx="2.25" fill="#7aa6d8"/><rect x="169.70" y="428.89" width="22.95" height="28.06" fill="url(#gBook)"/><rect x="166.22" y="426.25" width="26.43" height="2.34" fill="#ffffff"/><path d="M165.95,425.05H169.70V458.45H165.95Q163.70,458.45 163.70,456.20V427.30Q163.70,425.05 165.95,425.05z" fill="url(#gSpine)"/><rect x="165.50" y="428.56" width="4.20" height="0.67" fill="#8ea4cc" opacity=".7"/>
<rect x="163.70" y="468.75" width="30.00" height="33.40" rx="2.25" fill="#5688cc"/><rect x="166.70" y="468.75" width="27.00" height="4.01" rx="2.25" fill="#7aa6d8"/><rect x="169.70" y="472.59" width="22.95" height="28.06" fill="url(#gBook)"/><rect x="166.22" y="469.95" width="26.43" height="2.34" fill="#ffffff"/><path d="M165.95,468.75H169.70V502.15H165.95Q163.70,502.15 163.70,499.90V471.00Q163.70,468.75 165.95,468.75z" fill="url(#gSpine)"/><rect x="165.50" y="472.26" width="4.20" height="0.67" fill="#8ea4cc" opacity=".7"/>
<g transform="translate(318.600,808.500)"><circle r="5.300" fill="none" stroke="#2462c8" stroke-width="2.300"/><path d="M4.200,4.300l4.600,4.400" stroke="#1f58c4" stroke-width="3.200" stroke-linecap="round"/></g>
<g transform="translate(38.8,852)"><ellipse cx="0" cy="5.300" rx="8.900" ry="3.600" fill="#74b834" stroke="#5a9c24" stroke-width=".6"/><ellipse cx="0" cy="4.300" rx="6.500" ry="1.800" fill="#a0d860" opacity=".6"/><path d="M-2.200,-0.500h4.400v3.200q-2.200,1.300 -4.400,0z" fill="#e8b088"/><ellipse cx="0.200" cy="-2.800" rx="4.200" ry="5" fill="url(#gSkin)"/><path d="M-4.900,-2.200c-1.200,-5 1.400,-7.300 5,-7.300s6.200,2.300 5,7.300c-.6,-2.800 -1.400,-4 -2.600,-4.600c-1.600,1 -3.600,1 -4.800,0.400c-1.400,0.800 -2.100,2 -2.600,4.200z" fill="#b8642c"/><path d="M-4.400,-4.500c.4,-3.200 2.200,-4.600 4.500,-4.600" fill="none" stroke="#dc9458" stroke-width="1"/></g>
<g transform="translate(369,166)"><rect x="0" y="0" width="29.500" height="37" fill="#f6f8ff" stroke="#a9b3dc" stroke-width="1.200"/><rect x="5" y="4.500" width="19.500" height="5.500" fill="#a8d4f0" stroke="#7cb0dc" stroke-width=".8"/><path d="M5,13.5h19.500" stroke="#9cb8e0" stroke-width="1.200"/><path d="M5,16.7h19.500" stroke="#9cb8e0" stroke-width="1.200"/><path d="M5,19.9h19.500" stroke="#9cb8e0" stroke-width="1.200"/><path d="M5,23.1h19.500" stroke="#9cb8e0" stroke-width="1.200"/><path d="M5,26.3h19.500" stroke="#9cb8e0" stroke-width="1.200"/><path d="M5,29.5h19.500" stroke="#9cb8e0" stroke-width="1.200"/><path d="M5,32.7h19.500" stroke="#9cb8e0" stroke-width="1.200"/><rect x="13.500" y="21" width="5.600" height="12.500" fill="url(#gBlueV)" stroke="#5c94cc" stroke-width=".7"/><rect x="19.500" y="15.500" width="5.400" height="18" fill="#f8b070" stroke="#e08840" stroke-width=".7"/><rect x="20.700" y="16.500" width="1.600" height="16" fill="#fcd8b0"/></g>
<path d="M468.500,184h6.400l-3.200,3.500z" fill="#303030"/>
<g transform="translate(506.3,185.7)"><circle r="16.800" fill="url(#gGo)" stroke="#84b848" stroke-width="1"/><path d="M-16.800,0a16.800,16.800 0 0 1 33.600,0c-9,-6 -25,-6 -33.600,0z" fill="#fff" opacity=".15"/><path d="M-8.500,-4h8v-5.500l9.500,9.500l-9.500,9.500v-5.500h-8z" fill="#f4f8ec" stroke="#6c9c34" stroke-width=".8"/></g>
<path d="M602.400,184.200h6.400l-3.200,3.400z" fill="#303030"/>
<g transform="translate(648.4,185.5)"><circle r="16.200" fill="url(#gFace)" stroke="#e27c7c" stroke-width="3.600"/><circle r="17.800" fill="none" stroke="#d46a6a" stroke-width=".7"/><circle r="15.600" fill="none" stroke="#f6b8b8" stroke-width="1.300"/><circle r="14.200" fill="none" stroke="#c8ccd4" stroke-width=".6"/><path d="M0,0.500l7.600,-8.600" stroke="#5c6474" stroke-width="1.400"/><path d="M0,0.500v11" stroke="#5c6474" stroke-width="1.200"/><path d="M0.500,0.200h-11.500" stroke="#e04848" stroke-width="1.200"/><circle r="1.300" cy=".4" fill="#8890a0"/><g fill="#a8acb4"><circle cx="0" cy="-11.500" r=".7"/><circle cx="11.500" cy="0" r=".7"/><circle cx="0" cy="11.500" r=".7"/><circle cx="-7.500" cy="8" r=".7"/><circle cx="7.500" cy="8" r=".7"/><circle cx="-7.500" cy="-8" r=".7"/></g></g>
<g transform="translate(537.7,282.8)"><circle r="8.8" fill="#f8f8f8" stroke="#c6c6c6" stroke-width="1.100"/><path d="M-4.600,-3.600h9.200l-3.700,4.200v4.600l-1.800,-1v-3.600z" fill="#c0c0c0"/><ellipse cx="0" cy="-3.600" rx="4.600" ry="1.300" fill="#d4d4d4" stroke="#b8b8b8" stroke-width=".5"/></g>
<g transform="translate(687.1,282.8)"><circle r="8.8" fill="#f8f8f8" stroke="#c6c6c6" stroke-width="1.100"/><path d="M-4.600,-3.600h9.200l-3.700,4.200v4.600l-1.800,-1v-3.600z" fill="#c0c0c0"/><ellipse cx="0" cy="-3.600" rx="4.600" ry="1.300" fill="#d4d4d4" stroke="#b8b8b8" stroke-width=".5"/></g>
<g transform="translate(839.6,282.8)"><circle r="8.8" fill="#f8f8f8" stroke="#c6c6c6" stroke-width="1.100"/><path d="M-4.600,-3.600h9.200l-3.700,4.200v4.600l-1.800,-1v-3.600z" fill="#c0c0c0"/><ellipse cx="0" cy="-3.600" rx="4.600" ry="1.300" fill="#d4d4d4" stroke="#b8b8b8" stroke-width=".5"/></g>
<g transform="translate(976,282.8)"><circle r="8.8" fill="#f8f8f8" stroke="#c6c6c6" stroke-width="1.100"/><path d="M-4.600,-3.600h9.200l-3.700,4.200v4.600l-1.800,-1v-3.600z" fill="#c0c0c0"/><ellipse cx="0" cy="-3.600" rx="4.600" ry="1.300" fill="#d4d4d4" stroke="#b8b8b8" stroke-width=".5"/></g>
<g transform="translate(1081,282.8)"><circle r="8.8" fill="#f8f8f8" stroke="#c6c6c6" stroke-width="1.100"/><path d="M-4.600,-3.600h9.200l-3.700,4.200v4.600l-1.800,-1v-3.600z" fill="#c0c0c0"/><ellipse cx="0" cy="-3.600" rx="4.600" ry="1.300" fill="#d4d4d4" stroke="#b8b8b8" stroke-width=".5"/></g>
<g transform="translate(1242.3,282.8)"><circle r="8.8" fill="#f8f8f8" stroke="#c6c6c6" stroke-width="1.100"/><path d="M-4.600,-3.600h9.200l-3.700,4.200v4.600l-1.800,-1v-3.600z" fill="#c0c0c0"/><ellipse cx="0" cy="-3.600" rx="4.600" ry="1.300" fill="#d4d4d4" stroke="#b8b8b8" stroke-width=".5"/></g>
<g transform="translate(1367,282.8)"><circle r="8.8" fill="#f8f8f8" stroke="#c6c6c6" stroke-width="1.100"/><path d="M-4.600,-3.600h9.200l-3.700,4.200v4.600l-1.800,-1v-3.600z" fill="#c0c0c0"/><ellipse cx="0" cy="-3.600" rx="4.600" ry="1.300" fill="#d4d4d4" stroke="#b8b8b8" stroke-width=".5"/></g>
<path d="M352.500,322v9.400l4.700,-4.700z" fill="#404040"/>
<path d="M878,612.500h20" stroke="#9a9a9a" stroke-width="1" stroke-dasharray="1 1"/>
<rect x="362.50" y="632.50" width="15.30" height="17.00" rx="1.15" fill="#5688cc"/><rect x="364.03" y="632.50" width="13.77" height="2.04" rx="1.15" fill="#7aa6d8"/><rect x="365.56" y="634.46" width="11.44" height="14.04" fill="url(#gBook)"/><rect x="363.79" y="633.11" width="13.21" height="1.19" fill="#ffffff"/><path d="M363.65,632.50H365.56V649.50H363.65Q362.50,649.50 362.50,648.35V633.65Q362.50,632.50 363.65,632.50z" fill="url(#gSpine)"/><rect x="363.42" y="634.28" width="2.14" height="0.60" fill="#8ea4cc" opacity=".7"/>
<rect x="450.90" y="633.50" width="15.30" height="17.30" rx="1.15" fill="#5688cc"/><rect x="452.43" y="633.50" width="13.77" height="2.08" rx="1.15" fill="#7aa6d8"/><rect x="453.96" y="635.49" width="11.44" height="14.31" fill="url(#gBook)"/><rect x="452.19" y="634.12" width="13.21" height="1.21" fill="#ffffff"/><path d="M452.05,633.50H453.96V650.80H452.05Q450.90,650.80 450.90,649.65V634.65Q450.90,633.50 452.05,633.50z" fill="url(#gSpine)"/><rect x="451.82" y="635.32" width="2.14" height="0.60" fill="#8ea4cc" opacity=".7"/>
<rect x="598.50" y="633.50" width="15.30" height="17.30" rx="1.15" fill="#5688cc"/><rect x="600.03" y="633.50" width="13.77" height="2.08" rx="1.15" fill="#7aa6d8"/><rect x="601.56" y="635.49" width="11.44" height="14.31" fill="url(#gBook)"/><rect x="599.79" y="634.12" width="13.21" height="1.21" fill="#ffffff"/><path d="M599.65,633.50H601.56V650.80H599.65Q598.50,650.80 598.50,649.65V634.65Q598.50,633.50 599.65,633.50z" fill="url(#gSpine)"/><rect x="599.42" y="635.32" width="2.14" height="0.60" fill="#8ea4cc" opacity=".7"/>
<rect x="757.50" y="633.50" width="15.30" height="17.30" rx="1.15" fill="#5688cc"/><rect x="759.03" y="633.50" width="13.77" height="2.08" rx="1.15" fill="#7aa6d8"/><rect x="760.56" y="635.49" width="11.44" height="14.31" fill="url(#gBook)"/><rect x="758.79" y="634.12" width="13.21" height="1.21" fill="#ffffff"/><path d="M758.65,633.50H760.56V650.80H758.65Q757.50,650.80 757.50,649.65V634.65Q757.50,633.50 758.65,633.50z" fill="url(#gSpine)"/><rect x="758.42" y="635.32" width="2.14" height="0.60" fill="#8ea4cc" opacity=".7"/>
<rect x="835.50" y="633.50" width="15.30" height="17.30" rx="1.15" fill="#5688cc"/><rect x="837.03" y="633.50" width="13.77" height="2.08" rx="1.15" fill="#7aa6d8"/><rect x="838.56" y="635.49" width="11.44" height="14.31" fill="url(#gBook)"/><rect x="836.79" y="634.12" width="13.21" height="1.21" fill="#ffffff"/><path d="M836.65,633.50H838.56V650.80H836.65Q835.50,650.80 835.50,649.65V634.65Q835.50,633.50 836.65,633.50z" fill="url(#gSpine)"/><rect x="836.42" y="635.32" width="2.14" height="0.60" fill="#8ea4cc" opacity=".7"/>
<rect x="937.50" y="633.50" width="15.30" height="17.30" rx="1.15" fill="#5688cc"/><rect x="939.03" y="633.50" width="13.77" height="2.08" rx="1.15" fill="#7aa6d8"/><rect x="940.56" y="635.49" width="11.44" height="14.31" fill="url(#gBook)"/><rect x="938.79" y="634.12" width="13.21" height="1.21" fill="#ffffff"/><path d="M938.65,633.50H940.56V650.80H938.65Q937.50,650.80 937.50,649.65V634.65Q937.50,633.50 938.65,633.50z" fill="url(#gSpine)"/><rect x="938.42" y="635.32" width="2.14" height="0.60" fill="#8ea4cc" opacity=".7"/>
<rect x="1031.50" y="633.50" width="15.30" height="17.30" rx="1.15" fill="#5688cc"/><rect x="1033.03" y="633.50" width="13.77" height="2.08" rx="1.15" fill="#7aa6d8"/><rect x="1034.56" y="635.49" width="11.44" height="14.31" fill="url(#gBook)"/><rect x="1032.79" y="634.12" width="13.21" height="1.21" fill="#ffffff"/><path d="M1032.65,633.50H1034.56V650.80H1032.65Q1031.50,650.80 1031.50,649.65V634.65Q1031.50,633.50 1032.65,633.50z" fill="url(#gSpine)"/><rect x="1032.42" y="635.32" width="2.14" height="0.60" fill="#8ea4cc" opacity=".7"/>
<rect x="1115.00" y="633.50" width="15.30" height="17.30" rx="1.15" fill="#5688cc"/><rect x="1116.53" y="633.50" width="13.77" height="2.08" rx="1.15" fill="#7aa6d8"/><rect x="1118.06" y="635.49" width="11.44" height="14.31" fill="url(#gBook)"/><rect x="1116.29" y="634.12" width="13.21" height="1.21" fill="#ffffff"/><path d="M1116.15,633.50H1118.06V650.80H1116.15Q1115.00,650.80 1115.00,649.65V634.65Q1115.00,633.50 1116.15,633.50z" fill="url(#gSpine)"/><rect x="1115.92" y="635.32" width="2.14" height="0.60" fill="#8ea4cc" opacity=".7"/>
<rect x="1227.50" y="633.50" width="15.30" height="17.30" rx="1.15" fill="#5688cc"/><rect x="1229.03" y="633.50" width="13.77" height="2.08" rx="1.15" fill="#7aa6d8"/><rect x="1230.56" y="635.49" width="11.44" height="14.31" fill="url(#gBook)"/><rect x="1228.79" y="634.12" width="13.21" height="1.21" fill="#ffffff"/><path d="M1228.65,633.50H1230.56V650.80H1228.65Q1227.50,650.80 1227.50,649.65V634.65Q1227.50,633.50 1228.65,633.50z" fill="url(#gSpine)"/><rect x="1228.42" y="635.32" width="2.14" height="0.60" fill="#8ea4cc" opacity=".7"/>
<g transform="translate(491.3,731.5)"><circle r="8.8" fill="#f8f8f8" stroke="#c6c6c6" stroke-width="1.100"/><path d="M-4.600,-3.600h9.200l-3.700,4.200v4.600l-1.800,-1v-3.600z" fill="#c0c0c0"/><ellipse cx="0" cy="-3.600" rx="4.600" ry="1.300" fill="#d4d4d4" stroke="#b8b8b8" stroke-width=".5"/></g>
<g transform="translate(704.6,731.5)"><circle r="8.8" fill="#f8f8f8" stroke="#c6c6c6" stroke-width="1.100"/><path d="M-4.600,-3.600h9.200l-3.700,4.200v4.600l-1.800,-1v-3.600z" fill="#c0c0c0"/><ellipse cx="0" cy="-3.600" rx="4.600" ry="1.300" fill="#d4d4d4" stroke="#b8b8b8" stroke-width=".5"/></g>
<g transform="translate(917,731.5)"><circle r="8.8" fill="#f8f8f8" stroke="#c6c6c6" stroke-width="1.100"/><path d="M-4.600,-3.600h9.200l-3.700,4.200v4.600l-1.800,-1v-3.600z" fill="#c0c0c0"/><ellipse cx="0" cy="-3.600" rx="4.600" ry="1.300" fill="#d4d4d4" stroke="#b8b8b8" stroke-width=".5"/></g>
<g transform="translate(1167.4,731.5)"><circle r="8.8" fill="#f8f8f8" stroke="#c6c6c6" stroke-width="1.100"/><path d="M-4.600,-3.600h9.200l-3.700,4.200v4.600l-1.800,-1v-3.600z" fill="#c0c0c0"/><ellipse cx="0" cy="-3.600" rx="4.600" ry="1.300" fill="#d4d4d4" stroke="#b8b8b8" stroke-width=".5"/></g>
<path d="M355,770.500v8.400l4.200,-4.200z" fill="#404040"/>
<rect x="40.30" y="888.40" width="30.00" height="33.40" rx="2.25" fill="#5688cc"/><rect x="43.30" y="888.40" width="27.00" height="4.01" rx="2.25" fill="#7aa6d8"/><rect x="46.30" y="892.24" width="22.95" height="28.06" fill="url(#gBook)"/><rect x="42.82" y="889.60" width="26.43" height="2.34" fill="#ffffff"/><path d="M42.55,888.40H46.30V921.80H42.55Q40.30,921.80 40.30,919.55V890.65Q40.30,888.40 42.55,888.40z" fill="url(#gSpine)"/><rect x="42.10" y="891.91" width="4.20" height="0.67" fill="#8ea4cc" opacity=".7"/>
<path d="M123.8,901.5l10.4,8M134.2,901.5l-10.4,8" stroke="#2196e8" stroke-width="2.500" fill="none"/>
<rect x="172.30" y="888.40" width="30.00" height="33.40" rx="2.25" fill="#5688cc"/><rect x="175.30" y="888.40" width="27.00" height="4.01" rx="2.25" fill="#7aa6d8"/><rect x="178.30" y="892.24" width="22.95" height="28.06" fill="url(#gBook)"/><rect x="174.82" y="889.60" width="26.43" height="2.34" fill="#ffffff"/><path d="M174.55,888.40H178.30V921.80H174.55Q172.30,921.80 172.30,919.55V890.65Q172.30,888.40 174.55,888.40z" fill="url(#gSpine)"/><rect x="174.10" y="891.91" width="4.20" height="0.67" fill="#8ea4cc" opacity=".7"/>
<path d="M286.90000000000003,901.5l10.4,8M297.3,901.5l-10.4,8" stroke="#2196e8" stroke-width="2.500" fill="none"/>
<rect x="335.30" y="888.40" width="30.00" height="33.40" rx="2.25" fill="#5688cc"/><rect x="338.30" y="888.40" width="27.00" height="4.01" rx="2.25" fill="#7aa6d8"/><rect x="341.30" y="892.24" width="22.95" height="28.06" fill="url(#gBook)"/><rect x="337.82" y="889.60" width="26.43" height="2.34" fill="#ffffff"/><path d="M337.55,888.40H341.30V921.80H337.55Q335.30,921.80 335.30,919.55V890.65Q335.30,888.40 337.55,888.40z" fill="url(#gSpine)"/><rect x="337.10" y="891.91" width="4.20" height="0.67" fill="#8ea4cc" opacity=".7"/>
<path d="M434.40000000000003,901.5l10.4,8M444.8,901.5l-10.4,8" stroke="#2196e8" stroke-width="2.500" fill="none"/>
<rect x="483.00" y="889.40" width="30.00" height="33.40" rx="2.25" fill="#5688cc"/><rect x="486.00" y="889.40" width="27.00" height="4.01" rx="2.25" fill="#7aa6d8"/><rect x="489.00" y="893.24" width="22.95" height="28.06" fill="url(#gBook)"/><rect x="485.52" y="890.60" width="26.43" height="2.34" fill="#ffffff"/><path d="M485.25,889.40H489.00V922.80H485.25Q483.00,922.80 483.00,920.55V891.65Q483.00,889.40 485.25,889.40z" fill="url(#gSpine)"/><rect x="484.80" y="892.91" width="4.20" height="0.67" fill="#8ea4cc" opacity=".7"/>
<path d="M566.9,902.6l10.4,8M577.3000000000001,902.6l-10.4,8" stroke="#2196e8" stroke-width="2.500" fill="none"/>
<g transform="translate(38.7,947)"><circle r="10" fill="#4a7fb8"/><rect x="-1.500" y="-1.800" width="3" height="7.600" fill="#fff"/><circle cx="0" cy="-5" r="1.700" fill="#fff"/></g>
<g transform="translate(251.300,946.300)"><path d="M-7.500,-6.800v13.400a7.500,2.800 0 0 0 15,0v-13.400z" fill="url(#gOrange)" stroke="#d08830" stroke-width=".8"/><ellipse cx="0" cy="-6.800" rx="7.500" ry="2.800" fill="#ffe8b8" stroke="#d08830" stroke-width=".8"/><path d="M-7.500,-2.200a7.500,2.800 0 0 0 15,0M-7.500,2.300a7.500,2.800 0 0 0 15,0" fill="none" stroke="#d08830" stroke-width=".8"/><path d="M-7.500,-1.400a7.500,2.800 0 0 0 15,0M-7.500,3.100a7.500,2.800 0 0 0 15,0" fill="none" stroke="#fff0c8" stroke-width=".7" opacity=".8"/></g>
<g transform="translate(421.4,947.3)"><ellipse cx="0" cy="5.300" rx="8.900" ry="3.600" fill="#74b834" stroke="#5a9c24" stroke-width=".6"/><ellipse cx="0" cy="4.300" rx="6.500" ry="1.800" fill="#a0d860" opacity=".6"/><path d="M-2.200,-0.500h4.400v3.200q-2.200,1.300 -4.400,0z" fill="#e8b088"/><ellipse cx="0.200" cy="-2.800" rx="4.200" ry="5" fill="url(#gSkin)"/><path d="M-4.900,-2.200c-1.200,-5 1.400,-7.300 5,-7.300s6.200,2.300 5,7.300c-.6,-2.800 -1.400,-4 -2.600,-4.600c-1.600,1 -3.600,1 -4.800,0.400c-1.400,0.800 -2.100,2 -2.600,4.200z" fill="#b8642c"/><path d="M-4.400,-4.500c.4,-3.200 2.200,-4.600 4.500,-4.600" fill="none" stroke="#dc9458" stroke-width="1"/></g>
<g transform="translate(592,938)"><rect x="0.500" y="0.500" width="16" height="17" fill="#fff" stroke="#7c84b4" stroke-width="1"/><rect x="0.500" y="0.500" width="16" height="4" fill="#e05858"/><text x="8.500" y="15" font-family="Liberation Sans, sans-serif" font-size="10.500" font-weight="700" fill="#384068" text-anchor="middle">31</text></g>
<path d="M1426.0,945.5h3M1427.5,944.0v3" stroke="#7c7c7c" stroke-width="1.2"/><path d="M1421.0,950.5h3M1422.5,949.0v3" stroke="#7c7c7c" stroke-width="1.2"/><path d="M1426.0,950.5h3M1427.5,949.0v3" stroke="#7c7c7c" stroke-width="1.2"/><path d="M1416.0,955.5h3M1417.5,954.0v3" stroke="#7c7c7c" stroke-width="1.2"/><path d="M1421.0,955.5h3M1422.5,954.0v3" stroke="#7c7c7c" stroke-width="1.2"/><path d="M1426.0,955.5h3M1427.5,954.0v3" stroke="#7c7c7c" stroke-width="1.2"/></svg>
</body></html>
